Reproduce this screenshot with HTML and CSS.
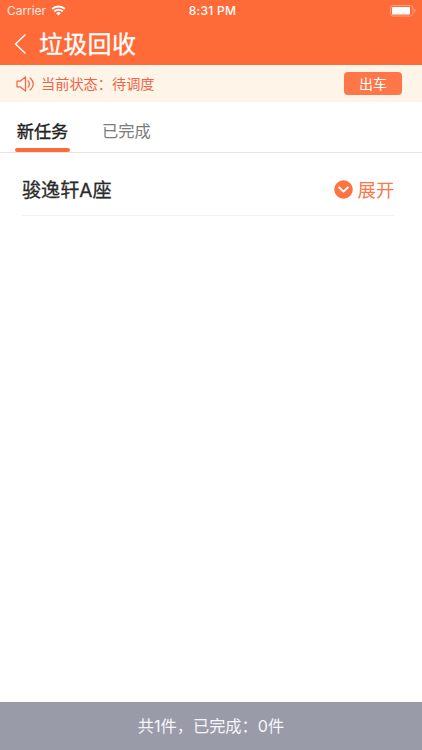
FILE: index.html
```html
<!DOCTYPE html>
<html lang="zh-CN">
<head>
<meta charset="utf-8">
<title>垃圾回收</title>
<link rel="stylesheet" href="styles.css">
</head>
<body>
<div class="app">
  <header class="header">
    <div class="status">
      <div class="carrier"><span>Carrier</span>
        <svg class="wifi" width="15" height="11" viewBox="0 0 16 12" fill="none" stroke="#fff" stroke-width="2.2"><path d="M1 4.4a10 10 0 0 1 14 0M3.5 7.1a6.4 6.4 0 0 1 9 0"/><path d="M5.5 8.9a3.5 3.5 0 0 1 5 0L8 11.5z" fill="#fff" stroke="none"/></svg>
      </div>
      <div class="clock">8:31 PM</div>
      <svg class="battery" width="27" height="12" viewBox="0 0 27 12"><rect x=".5" y=".5" width="22.5" height="10.5" rx="2.5" fill="none" stroke="#ffa080"/><rect x="2" y="2" width="18" height="7.5" rx=".7" fill="#fff"/><path d="M24.3 3.8q3 2 0 4z" fill="#ffa080"/></svg>
    </div>
    <div class="nav">
      <svg class="back" width="13" height="22" viewBox="0 0 13 22" fill="none" stroke="#fff" stroke-width="1.4"><path d="M11.5 1.5L1.5 11l10 9.5"/></svg>
      <h1 class="title">垃圾回收</h1>
    </div>
  </header>
  <section class="notice">
    <svg class="speaker" width="19" height="16" viewBox="0 0 19 16" fill="none" stroke="#f0694a" stroke-width="1.25" stroke-linejoin="round" stroke-linecap="round"><path d="M1 5.2h3L9.5 1v14L4 10.8H1z"/><path d="M12 4.8q2.8 3.2 0 6.4M14.2 2q6.2 6 0 12"/></svg>
    <span class="state">当前状态：待调度</span>
    <button class="depart">出车</button>
  </section>
  <nav class="tabs">
    <div class="tab active">新任务</div>
    <div class="tab">已完成</div>
  </nav>
  <main class="list">
    <div class="row">
      <span class="name">骏逸轩A座</span>
      <span class="expand">
        <svg width="19" height="19" viewBox="0 0 19 19"><circle cx="9.5" cy="9.5" r="9.3" fill="#fd7442"/><path d="M5.2 7.5l4.3 4.1 4.3-4.1" fill="none" stroke="#fff" stroke-width="2" stroke-linecap="round" stroke-linejoin="round"/></svg>
        <span>展开</span>
      </span>
    </div>
  </main>
  <footer class="footer">共1件，已完成：0件</footer>
</div>
</body>
</html>
```
FILE: styles.css
```css
* { box-sizing: border-box; }
body { margin: 0; background: #fff; font-family: Inter, "Noto Sans CJK SC", sans-serif; }
svg { display: block; flex: none; }
.app { width: 422px; height: 750px; display: flex; flex-direction: column; }
.header { height: 65px; background: #ff6b38; color: #fff; }
.status { height: 22px; display: grid; grid-template-columns: 1fr auto 1fr; align-items: center; padding: 0 6px 0 7px; font-size: 12px; line-height: 22px; }
.carrier { display: flex; align-items: center; gap: 5px; color: #ffeae2; letter-spacing: -.05px; }
.wifi { margin-top: -1px; }
.clock { font-weight: 500; letter-spacing: .3px; padding-left: 2px; }
.battery { justify-self: end; margin-right: -1px; }
.nav { height: 43px; display: flex; align-items: center; padding-left: 14px; }
.title { margin: 2px 0 0 12px; font-size: 24px; line-height: 40px; font-weight: 400; -webkit-text-stroke: .3px; letter-spacing: .3px; }
.notice { height: 37px; background: #fff4e8; display: flex; align-items: center; padding: 0 20px 0 16px; color: #ee6446; }
.state { margin: 1px 0 0 6px; font-size: 14.2px; line-height: 20px; }
.depart { margin-left: auto; width: 58px; height: 23px; padding: 0; border: 0; border-radius: 4px; background: #ff7648; color: #fff; font: 14px/23px Inter, "Noto Sans CJK SC", sans-serif; }
.tabs { height: 51px; display: flex; gap: 32px; padding-left: 15px; border-bottom: 1px solid #e6e6e6; }
.tab { height: 50px; font-size: 16.3px; line-height: 59px; color: #7c7c7c; }
.tab.active { position: relative; width: 55px; color: #222; font-size: 17.2px; text-align: center; -webkit-text-stroke: .35px; }
.tab.active::after { content: ""; position: absolute; left: 0; right: 0; bottom: 0; height: 4px; border-radius: 2px; background: #ff6b38; }
.list { flex: 1; padding: 12px 27px 0 22px; }
.row { height: 51px; display: flex; align-items: center; justify-content: space-between; padding-bottom: 2px; border-bottom: 1px solid #f1f1f1; }
.name { font-size: 19.1px; color: #2b2b2b; -webkit-text-stroke: .3px; }
.expand { display: flex; align-items: center; gap: 5px; padding-right: .6px; font-size: 18.4px; color: #fb7748; }
.footer { height: 48px; background: #9a9ba9; color: #f6f6fa; text-align: center; font-size: 16.2px; line-height: 49px; }
```
